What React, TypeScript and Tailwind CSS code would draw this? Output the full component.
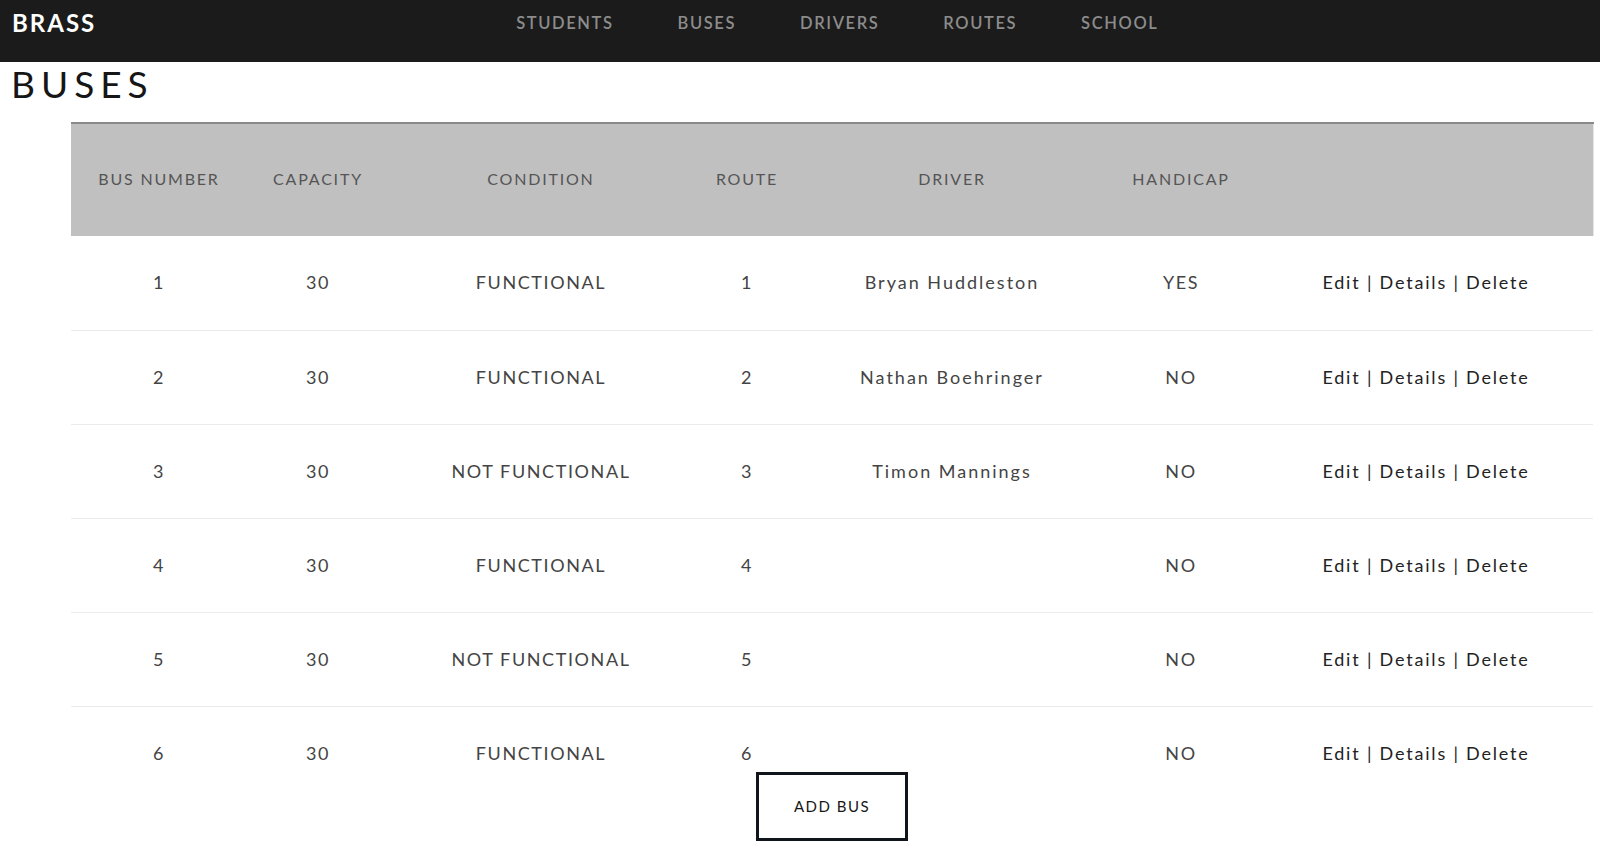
import React from "react";

const rows = [
  { n: "1", cap: "30", cond: "FUNCTIONAL", route: "1", driver: "Bryan Huddleston", hc: "YES" },
  { n: "2", cap: "30", cond: "FUNCTIONAL", route: "2", driver: "Nathan Boehringer", hc: "NO" },
  { n: "3", cap: "30", cond: "NOT FUNCTIONAL", route: "3", driver: "Timon Mannings", hc: "NO" },
  { n: "4", cap: "30", cond: "FUNCTIONAL", route: "4", driver: "", hc: "NO" },
  { n: "5", cap: "30", cond: "NOT FUNCTIONAL", route: "5", driver: "", hc: "NO" },
  { n: "6", cap: "30", cond: "FUNCTIONAL", route: "6", driver: "", hc: "NO" },
];

const widths = ["w-[176px]", "w-[142px]", "w-[304px]", "w-[108px]", "w-[302px]", "w-[156px]", "w-[334px]"];

export default function App() {
  return (
    <div className="min-h-[851px] bg-white font-['Lato','Open_Sans',sans-serif]">
      <nav className="h-[62px] bg-[#1b1b1b]">
        <div className="flex h-[46px] items-center pl-[12px]">
          <span className="text-[24px] font-bold tracking-[2px] text-white">BRASS</span>
          <ul className="ml-[420px] flex gap-[64px] text-[16.5px] font-semibold tracking-[1.6px] text-[#8c8c8c]">
            <li>STUDENTS</li>
            <li>BUSES</li>
            <li>DRIVERS</li>
            <li>ROUTES</li>
            <li>SCHOOL</li>
          </ul>
        </div>
      </nav>
      <h1 className="pl-[11px] text-[37px] leading-[44px] tracking-[6px] text-[#161616]">BUSES</h1>
      <div className="mt-[16px] h-[650px] pl-[71px]">
        <table className="w-[1522px] table-fixed border-collapse text-center">
          <thead>
            <tr className="h-[113px] border-t-2 border-r border-t-[#8a8a8a] border-r-[#e6e6e6] bg-[#c0c0c0] text-[16px] font-normal tracking-[1.8px] text-[#555]">
              {["BUS NUMBER", "CAPACITY", "CONDITION", "ROUTE", "DRIVER", "HANDICAP", ""].map((h, i) => (
                <th key={i} className={`${widths[i]} pb-[2px] font-normal`}>
                  {h}
                </th>
              ))}
            </tr>
          </thead>
          <tbody>
            {rows.map((r, i) => (
              <tr
                key={r.n}
                className={`h-[94px] text-[18px] tracking-[1.6px] text-[#444] ${i < rows.length - 1 ? "border-b border-[#ececec]" : ""}`}
              >
                <td>{r.n}</td>
                <td>{r.cap}</td>
                <td>{r.cond}</td>
                <td>{r.route}</td>
                <td className="tracking-[2px]">{r.driver}</td>
                <td>{r.hc}</td>
                <td className="tracking-[1.8px] text-[#222]">Edit | Details | Delete</td>
              </tr>
            ))}
          </tbody>
        </table>
      </div>
      <div className="flex justify-center pl-[64px]">
        <button className="h-[69px] w-[152px] border-[3px] border-[#10151b] bg-white text-[15px] tracking-[1.5px] text-[#161616]">
          ADD BUS
        </button>
      </div>
    </div>
  );
}
